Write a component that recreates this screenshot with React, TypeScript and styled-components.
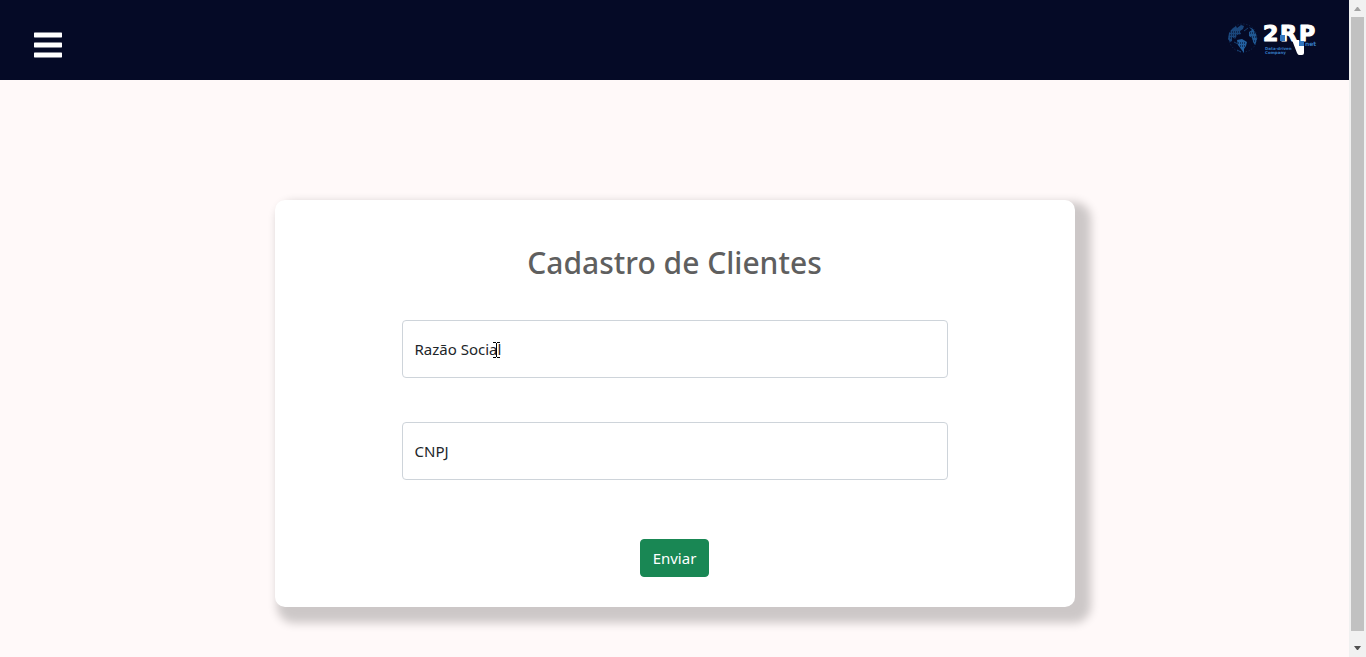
import React from "react";
import styled, { createGlobalStyle } from "styled-components";

const GlobalStyle = createGlobalStyle`
  * { box-sizing: border-box; }
  body {
    margin: 0;
    background: #fff9f9;
    color: #212529;
    font-family: "Segoe UI", "Noto Sans", "Open Sans", sans-serif;
    font-size: 15px;
    line-height: 24px;
  }
`;

const Viewport = styled.div`
  display: flex;
  height: 100vh;
  overflow: hidden;
`;

const Page = styled.div`
  flex: 1;
  min-width: 0;
`;

const Header = styled.header`
  display: flex;
  justify-content: space-between;
  align-items: center;
  height: 80px;
  padding: 0 30px 0 34px;
  background: #050a26;
`;

const MenuButton = styled.button`
  display: flex;
  margin-top: 10px;
  padding: 0;
  border: 0;
  background: none;
  cursor: pointer;
`;

const LogoLink = styled.a`
  display: flex;
  margin-bottom: 4px;
`;

const Main = styled.main`
  display: flex;
  justify-content: center;
  padding: 120px 24px 50px;
`;

const Card = styled.form`
  display: flex;
  flex-direction: column;
  align-items: center;
  width: 100%;
  max-width: 800px;
  padding: 43px 24px 30px;
  border-radius: 10px;
  background: #fff;
  box-shadow: 9px 9px 10px 7px rgba(0, 0, 0, 0.2);
`;

const Title = styled.h1`
  margin: 0 0 37px;
  color: #5f5f5f;
  font-size: 30px;
  font-weight: 500;
  line-height: 40px;
`;

const Fields = styled.div`
  display: grid;
  gap: 44px;
  width: 100%;
  max-width: 546px;
  margin-bottom: 59px;
`;

const FieldBox = styled.div`
  position: relative;
`;

const Input = styled.input`
  display: block;
  width: 100%;
  height: 58px;
  padding: 26px 12px 10px;
  border: 1px solid #ced4da;
  border-radius: 4px;
  background: #fff;
  color: inherit;
  font: inherit;
`;

const Label = styled.label`
  position: absolute;
  top: 17px;
  left: 13px;
  pointer-events: none;
`;

const SubmitButton = styled.button`
  height: 38px;
  padding: 6px 12px;
  border: 1px solid #198754;
  border-radius: 4px;
  background: #198754;
  color: #fff;
  font: inherit;
  cursor: pointer;
`;

const TextCursor = styled.svg`
  position: absolute;
  top: 22px;
  left: 91px;
  pointer-events: none;
`;

const ScrollTrack = styled.div`
  display: flex;
  flex-direction: column;
  width: 17px;
  background: #f1f1f1;
`;

const ScrollArrow = styled.svg`
  flex: none;
  display: block;
`;

const ScrollThumb = styled.div`
  flex: 1;
  margin: 0 2px 9px;
  background: #c1c1c1;
`;

function Globe() {
  return (
    <g>
      <g fill="#2360a0">
        <path d="M1 17 2 11 5 7 9 4 10 6 14 3 17 4 16 7 13 9 14 12 10 13 8 17 5 15 5 19 3 20z" opacity=".7" />
        <path d="M10 18 15 17 20 20 19 24 17 27 17 31 14 27 11 23z" />
        <path d="M22 5 26 7 29 12 30 18 28 23 26 20 25 16 22 14 22 10 25 8z" opacity=".9" />
      </g>
      <circle cx="16" cy="16" r="14" fill="none" stroke="#2360a0" strokeDasharray="1 2" opacity=".4" />
      <path d="M3 10h12M3 13h9M3 16h5M11 21h8M13 24h5M23 11h5M24 15h6M25 19h5" stroke="#050a26" strokeDasharray="1 1" />
      <path d="M7 20 11 22M10 28 14 30M17 9 21 6" stroke="#2360a0" opacity=".6" />
    </g>
  );
}

function Logo() {
  return (
    <svg width="92" height="48" viewBox="0 -8 92 48" role="img" aria-label="2RP.net">
      <Globe />
      <g fill="#fff" stroke="#fff" strokeWidth="1.2" strokeLinejoin="round" fontFamily="DejaVu Sans, sans-serif" fontWeight="700" fontSize="22">
        <text x="36" y="19">2</text>
        <text x="53" y="19">R</text>
        <text x="72" y="19">P</text>
      </g>
      <path d="M65 18h7l2 4h3v9q0 2-2 2h-3q-1 0-2-2z" fill="#fff" />
      <path d="M53 13h5v6h-5zM72 19h5v5h-5z" fill="#3478c0" />
      <g fill="#3478c0" fontFamily="DejaVu Sans, sans-serif" fontWeight="700">
        <text x="78" y="24" fontSize="6">net</text>
        <text x="38" y="28" fontSize="4">Data-driven</text>
        <text x="38" y="32" fontSize="4">Company</text>
      </g>
    </svg>
  );
}

type FieldProps = { id: string; label: string; children?: React.ReactNode };

function Field({ id, label, children }: FieldProps) {
  return (
    <FieldBox>
      <Input id={id} name={id} type="text" />
      <Label htmlFor={id}>{label}</Label>
      {children}
    </FieldBox>
  );
}

export default function App() {
  return (
    <Viewport>
      <GlobalStyle />
      <Page>
        <Header>
          <MenuButton type="button" aria-label="Menu">
            <svg width="28" height="26" viewBox="0 0 28 26" fill="#fff">
              <rect y="0.6" width="28" height="4.8" rx="0.6" />
              <rect y="10.6" width="28" height="4.8" rx="0.6" />
              <rect y="20.6" width="28" height="4.8" rx="0.6" />
            </svg>
          </MenuButton>
          <LogoLink href="#" aria-label="2RP.net">
            <Logo />
          </LogoLink>
        </Header>
        <Main>
          <Card onSubmit={(event) => event.preventDefault()}>
            <Title>Cadastro de Clientes</Title>
            <Fields>
              <Field id="razaoSocial" label="Razão Social">
                <TextCursor width="8" height="16" viewBox="0 0 8 16" fill="none" stroke="#000" shapeRendering="crispEdges" aria-hidden="true">
                  <path d="M0 .5h3M4 .5h3M3.5 1v14M0 15.5h3M4 15.5h3" />
                </TextCursor>
              </Field>
              <Field id="cnpj" label="CNPJ" />
            </Fields>
            <SubmitButton type="submit">Enviar</SubmitButton>
          </Card>
        </Main>
      </Page>
      <ScrollTrack aria-hidden="true">
        <ScrollArrow width="17" height="17" viewBox="0 0 17 17" fill="#a3a3a3">
          <path d="M5 11 8 7h1l3 4z" />
        </ScrollArrow>
        <ScrollThumb />
        <ScrollArrow width="17" height="17" viewBox="0 0 17 17" fill="#505050">
          <path d="M5 6h7l-3 4H8z" />
        </ScrollArrow>
      </ScrollTrack>
    </Viewport>
  );
}
